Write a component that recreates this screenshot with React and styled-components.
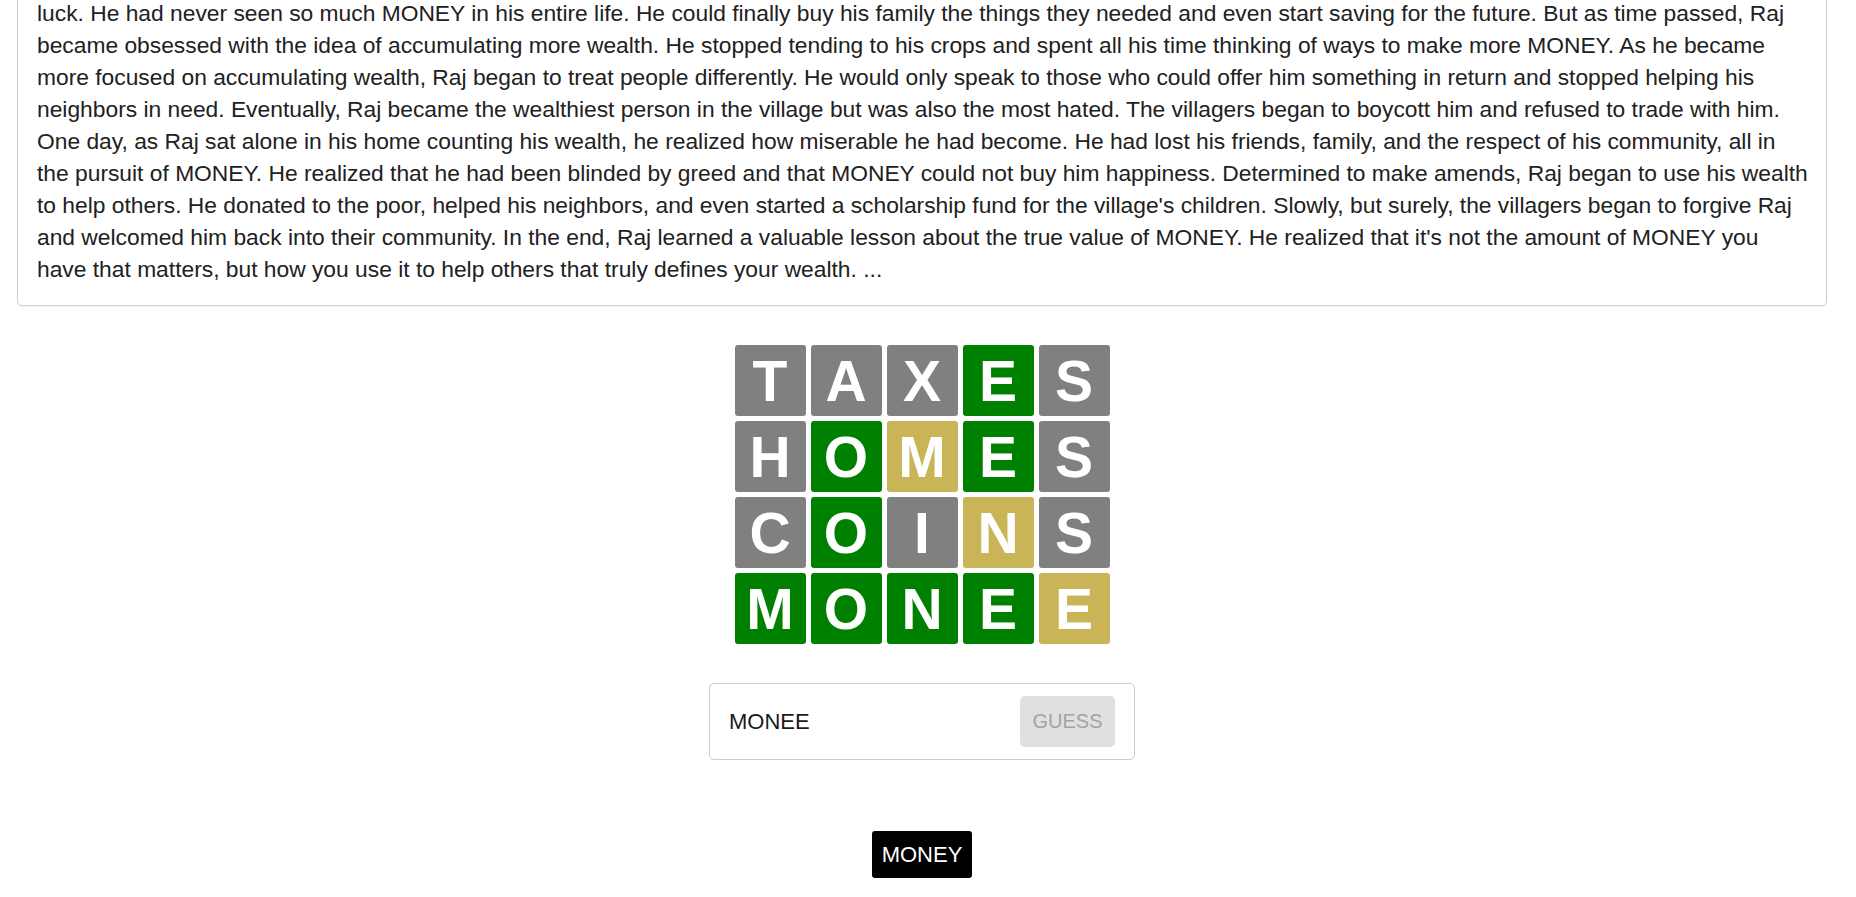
import * as React from "react";
import styled, { createGlobalStyle } from "styled-components";

const story =
  "luck. He had never seen so much MONEY in his entire life. He could finally buy his family the things they needed and even start saving for the future. But as time passed, Raj became obsessed with the idea of accumulating more wealth. He stopped tending to his crops and spent all his time thinking of ways to make more MONEY. As he became more focused on accumulating wealth, Raj began to treat people differently. He would only speak to those who could offer him something in return and stopped helping his neighbors in need. Eventually, Raj became the wealthiest person in the village but was also the most hated. The villagers began to boycott him and refused to trade with him. One day, as Raj sat alone in his home counting his wealth, he realized how miserable he had become. He had lost his friends, family, and the respect of his community, all in the pursuit of MONEY. He realized that he had been blinded by greed and that MONEY could not buy him happiness. Determined to make amends, Raj began to use his wealth to help others. He donated to the poor, helped his neighbors, and even started a scholarship fund for the village's children. Slowly, but surely, the villagers began to forgive Raj and welcomed him back into their community. In the end, Raj learned a valuable lesson about the true value of MONEY. He realized that it's not the amount of MONEY you have that matters, but how you use it to help others that truly defines your wealth. ...";

// g = correct spot, y = wrong spot, x = not in word
const guesses = [
  ["TAXES", "xxxgx"],
  ["HOMES", "xgygx"],
  ["COINS", "xgxyx"],
  ["MONEE", "ggggy"],
];

const GlobalStyle = createGlobalStyle`
  body {
    margin: 0;
    font-family: "Liberation Sans", Arial, sans-serif;
    color: #212121;
    background: #fff;
  }
`;

const App = () => {
  return (
    <>
      <GlobalStyle />
      <Page>
        <StoryCard>
          <StoryText>{story}</StoryText>
        </StoryCard>

        <Board>
          {guesses.map(([word, marks]) =>
            word.split("").map((letter, i) => (
              <Tile key={word + i} mark={marks[i]}>
                {letter}
              </Tile>
            ))
          )}
        </Board>

        <GuessForm onSubmit={(e) => e.preventDefault()}>
          <GuessInput defaultValue="MONEE" />
          <GuessButton disabled>GUESS</GuessButton>
        </GuessForm>

        <Answer>MONEY</Answer>
      </Page>
    </>
  );
};

const tileColors = {
  g: "#008000",
  y: "#c9b458",
  x: "#808080",
};

const Page = styled.main`
  display: flex;
  flex-direction: column;
  align-items: center;
  /* page is scrolled a little, the top of the story card is out of view */
  margin-top: -24px;
  padding: 0 29px 18px 17px;
`;

const StoryCard = styled.section`
  align-self: stretch;
  border: 1px solid #cfcfcf;
  border-radius: 5px;
  padding: 20px 16px 20px 19px;
  box-shadow: 0 1px 2px rgba(0, 0, 0, 0.06);
`;

const StoryText = styled.p`
  margin: 0;
  font-size: 22.8px;
  line-height: 32px;
`;

const Board = styled.div`
  display: grid;
  grid-template-columns: repeat(5, 71px);
  grid-auto-rows: 71px;
  gap: 5px;
  margin-top: 39px;
`;

const Tile = styled.div`
  display: flex;
  align-items: center;
  justify-content: center;
  border-radius: 3px;
  background: ${(p) => tileColors[p.mark]};
  color: #fff;
  font-size: 57px;
  font-weight: 700;
`;

const GuessForm = styled.form`
  display: flex;
  align-items: center;
  width: 426px;
  height: 77px;
  box-sizing: border-box;
  margin-top: 39px;
  padding: 0 19px;
  border: 1px solid #cccccc;
  border-radius: 5px;
`;

const GuessInput = styled.input`
  flex: 1;
  min-width: 0;
  border: none;
  outline: none;
  padding: 0;
  font-family: inherit;
  font-size: 22px;
  color: #1a1a1a;
  background: transparent;
`;

const GuessButton = styled.button`
  width: 95px;
  height: 51px;
  border: none;
  border-radius: 5px;
  background: #e0e0e0;
  color: #a3a3a3;
  font-family: inherit;
  font-size: 20px;
`;

const Answer = styled.div`
  margin-top: 71px;
  padding: 11px 10px;
  border-radius: 3px;
  background: #000;
  color: #fff;
  font-size: 22px;
  line-height: 25px;
`;

export default App;
